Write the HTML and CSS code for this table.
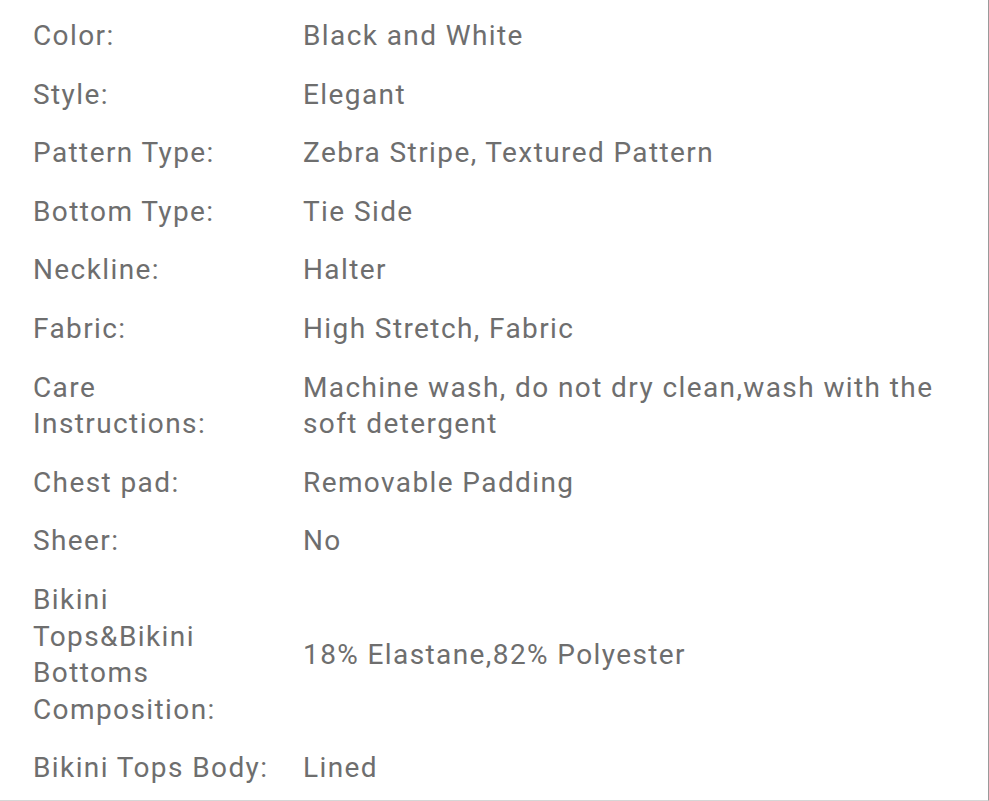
FILE: index.html
```html
<!DOCTYPE html>
<html>
<head>
<meta charset="utf-8">
<link rel="stylesheet" href="styles.css">
</head>
<body>
<div class="panel">
  <table class="specs">
    <tr><td class="k">Color:</td><td class="v">Black and White</td></tr>
    <tr><td class="k">Style:</td><td class="v">Elegant</td></tr>
    <tr><td class="k">Pattern Type:</td><td class="v">Zebra Stripe, Textured Pattern</td></tr>
    <tr><td class="k">Bottom Type:</td><td class="v">Tie Side</td></tr>
    <tr><td class="k">Neckline:</td><td class="v">Halter</td></tr>
    <tr><td class="k">Fabric:</td><td class="v">High Stretch, Fabric</td></tr>
    <tr><td class="k">Care Instructions:</td><td class="v">Machine wash, do not dry clean,wash with the soft detergent</td></tr>
    <tr><td class="k">Chest pad:</td><td class="v">Removable Padding</td></tr>
    <tr><td class="k">Sheer:</td><td class="v">No</td></tr>
    <tr><td class="k">Bikini Tops&amp;Bikini Bottoms Composition:</td><td class="v">18% Elastane,82% Polyester</td></tr>
    <tr><td class="k">Bikini Tops Body:</td><td class="v">Lined</td></tr>
  </table>
</div>
</body>
</html>
```

FILE: styles.css
```css
html, body {
  margin: 0;
  padding: 0;
  background: #fff;
}
.panel {
  box-sizing: border-box;
  width: 989px;
  height: 801px;
  border-right: 1px solid #9a9a9a;
  border-bottom: 1px solid #d6d6d6;
  padding: 7px 20px 0 33px;
  font-family: Roboto, "Liberation Sans", sans-serif;
  font-size: 28px;
  line-height: 36.6px;
  letter-spacing: 0.05em;
  color: #6e6e6e;
}
.specs {
  border-collapse: collapse;
  width: 100%;
  table-layout: fixed;
}
.specs td {
  padding: 11px 0;
  vertical-align: middle;
}
.specs .k {
  width: 236px;
  padding-right: 34px;
}
```
